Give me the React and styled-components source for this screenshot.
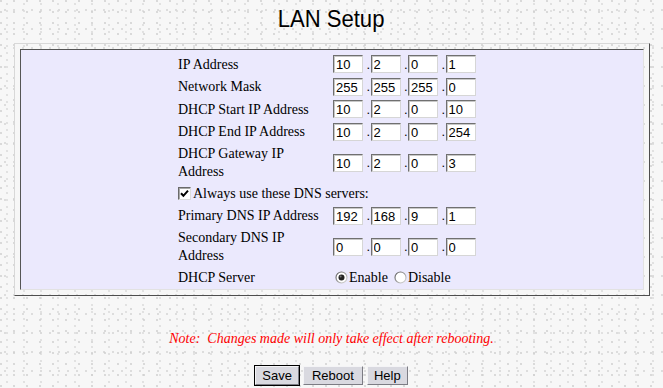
import React from "react";
import styled, { createGlobalStyle } from "styled-components";

const Global = createGlobalStyle`
  html, body { margin: 0; padding: 0; }
  body {
    width: 663px;
    height: 388px;
    overflow: hidden;
    background-color: #f7f7f7;
    background-image:
      radial-gradient(circle at 1px 1px, #cfcfcf 0.6px, transparent 1px),
      radial-gradient(circle at 1px 1px, #dadada 0.6px, transparent 1px),
      radial-gradient(circle at 1px 1px, #d4d4d4 0.6px, transparent 1px);
    background-size: 13px 11px, 17px 7px, 9px 19px;
    background-position: 0 0, 6px 3px, 4px 9px;
  }
`;

const Page = styled.div`
  display: flex;
  flex-direction: column;
  align-items: center;
  width: 663px;
`;

const Title = styled.h1`
  margin: 6px 0 0;
  height: 37px;
  font: normal 24px/26px "Liberation Sans", Arial, sans-serif;
  color: #000;
  transform: scaleX(0.92);
`;

const Frame = styled.div`
  width: 636px;
  box-sizing: border-box;
  border: 1px solid;
  border-color: #d8d8d8 #4e4e4e #4e4e4e #d8d8d8;
  padding: 5px;
`;

const Panel = styled.div`
  background: #ebe9fd;
  border: 1px solid;
  border-color: #555 #e2e2e2 #e2e2e2 #555;
  padding: 3px 0 0;
`;

const Form = styled.div`
  width: 309px;
  margin: 0 auto;
  display: grid;
  grid-template-columns: 156px 153px;
  grid-auto-rows: minmax(22.5px, auto);
  align-items: center;
`;

const Label = styled.div`
  font: 14px/17.5px "Liberation Serif", "Times New Roman", serif;
  color: #000;
  padding: 2px 6px 2px 1px;
`;

const IpField = styled.div`
  display: flex;
  align-items: center;
  font: 13px "Liberation Sans", Arial, sans-serif;
`;

const Octet = styled.input`
  width: 30px;
  height: 18px;
  box-sizing: border-box;
  margin: 0;
  border: 1px solid;
  border-color: #707070 #d6d6d6 #d6d6d6 #707070;
  box-shadow: inset 1px 1px 0 #c8c8c8;
  background: #fff;
  padding: 1px 0 0 2px;
  font: 13px "Liberation Sans", Arial, sans-serif;
  color: #000;
  outline: none;
`;

const Dot = styled.span`
  white-space: pre;
  width: 7.5px;
  color: #000;
`;

const CheckRow = styled.label`
  grid-column: 1 / -1;
  display: flex;
  align-items: center;
  gap: 2px;
  padding-left: 1px;
  font: 14px/17.5px "Liberation Serif", "Times New Roman", serif;
  color: #000;
`;

const CheckBox = styled.span`
  width: 13px;
  height: 13px;
  box-sizing: border-box;
  background: #fff;
  border: 1px solid;
  border-color: #6a6a6a #dcdcdc #dcdcdc #6a6a6a;
  box-shadow: inset 1px 1px 0 #a8a8a8;
  display: flex;
  align-items: center;
  justify-content: center;
`;

const RadioGroup = styled.div`
  display: flex;
  align-items: center;
  padding-left: 2px;
  font: 14px/17.5px "Liberation Serif", "Times New Roman", serif;
  color: #000;
`;

const RadioOption = styled.label`
  display: flex;
  align-items: center;
  gap: 1px;
  margin-right: ${(p) => p.$gap || 0}px;
`;

const Note = styled.p`
  margin: 34px 0 0;
  font: italic 14px/17px "Liberation Serif", "Times New Roman", serif;
  color: #ff0000;
`;

const Buttons = styled.div`
  display: flex;
  gap: 4px;
  margin-top: 19px;
`;

const Button = styled.button`
  height: 19px;
  box-sizing: border-box;
  padding: 0 ${(p) => p.$pad || 6}px;
  margin: 0;
  font: 13px "Liberation Sans", Arial, sans-serif;
  color: #000;
  background: #d9d9e0;
  border: 1px solid;
  border-color: #f4f4f6 #7c7c84 #7c7c84 #f4f4f6;
  box-shadow: ${(p) => (p.$default ? "0 0 0 1px #000" : "none")};
  cursor: default;
`;

function Radio({ checked }) {
  const id = checked ? "rg1" : "rg2";
  return (
    <svg width="13" height="13" viewBox="0 0 13 13">
      <defs>
        <linearGradient id={id} x1="0" y1="0" x2="1" y2="1">
          <stop offset="0" stopColor="#5a5a5a" />
          <stop offset="1" stopColor="#e0e0e0" />
        </linearGradient>
      </defs>
      <circle cx="6.5" cy="6.5" r="5.5" fill="#fff" stroke={`url(#${id})`} strokeWidth="1.2" />
      {checked && <circle cx="6.5" cy="6.5" r="3" fill="#222" />}
      {checked && <circle cx="5.6" cy="5.6" r="1" fill="#777" />}
    </svg>
  );
}

function Ip({ values }) {
  return (
    <IpField>
      {values.map((v, i) => (
        <React.Fragment key={i}>
          {i > 0 && <Dot> .</Dot>}
          <Octet defaultValue={v} size={3} />
        </React.Fragment>
      ))}
    </IpField>
  );
}

const rows = [
  ["IP Address", ["10", "2", "0", "1"]],
  ["Network Mask", ["255", "255", "255", "0"]],
  ["DHCP Start IP Address", ["10", "2", "0", "10"]],
  ["DHCP End IP Address", ["10", "2", "0", "254"]],
  ["DHCP Gateway IP Address", ["10", "2", "0", "3"]],
];

export default function App() {
  return (
    <>
      <Global />
      <Page>
        <Title>LAN Setup</Title>
        <Frame>
          <Panel>
            <Form>
              {rows.map(([label, vals]) => (
                <React.Fragment key={label}>
                  <Label>{label}</Label>
                  <Ip values={vals} />
                </React.Fragment>
              ))}
              <CheckRow>
                <CheckBox>
                  <svg width="9" height="9" viewBox="0 0 9 9">
                    <path d="M1 4.2 L3.4 6.8 L8 1.6" fill="none" stroke="#000" strokeWidth="2" />
                  </svg>
                </CheckBox>
                Always use these DNS servers:
              </CheckRow>
              <Label>Primary DNS IP Address</Label>
              <Ip values={["192", "168", "9", "1"]} />
              <Label>Secondary DNS IP Address</Label>
              <Ip values={["0", "0", "0", "0"]} />
              <Label>DHCP Server</Label>
              <RadioGroup>
                <RadioOption $gap={6}>
                  <Radio checked />
                  Enable
                </RadioOption>
                <RadioOption>
                  <Radio />
                  Disable
                </RadioOption>
              </RadioGroup>
            </Form>
          </Panel>
        </Frame>
        <Note>Note:&nbsp; Changes made will only take effect after rebooting.</Note>
        <Buttons>
          <Button $default>Save</Button>
          <Button $pad={8}>Reboot</Button>
          <Button>Help</Button>
        </Buttons>
      </Page>
    </>
  );
}
